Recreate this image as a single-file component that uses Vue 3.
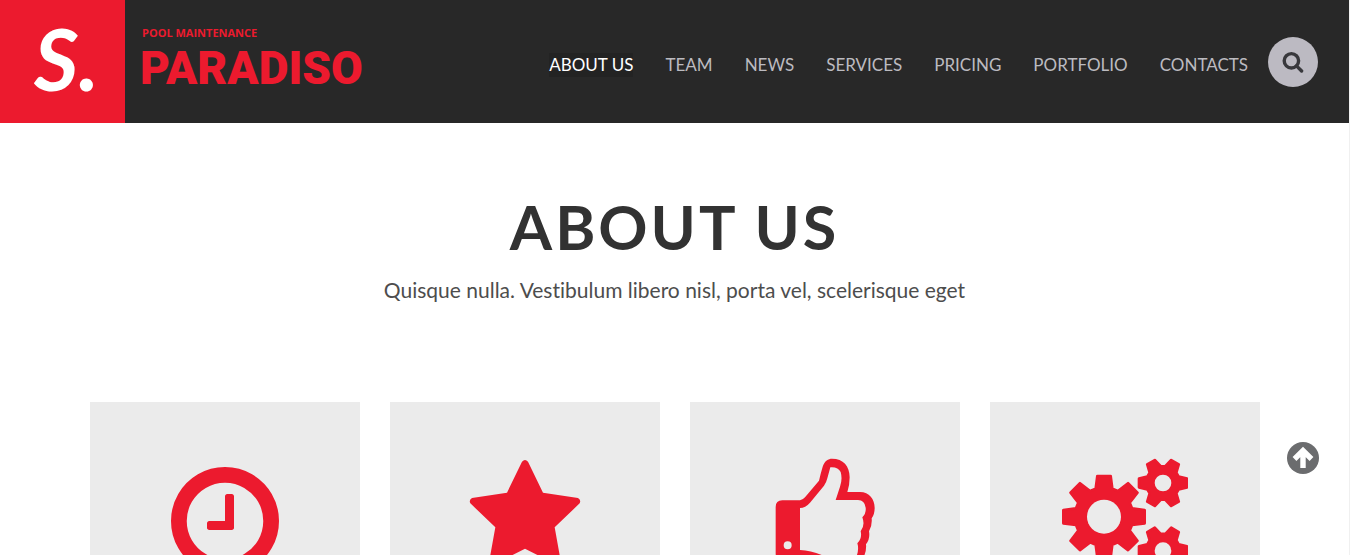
<script setup>
const links = ['About us', 'Team', 'News', 'Services', 'Pricing', 'Portfolio', 'Contacts']
const cards = ['clock', 'star', 'thumb', 'gears']

// Outline of a cog: each tooth is a tapered block on a round body.
function cog(cx, cy, teeth, offset, body, outer, baseHalf, tipHalf) {
  const points = []
  for (let i = 0; i < teeth; i++) {
    const a = offset + (i * 2 * Math.PI) / teeth
    const at = (r, t) =>
      `${(cx + r * Math.cos(a) - t * Math.sin(a)).toFixed(1)},${(cy + r * Math.sin(a) + t * Math.cos(a)).toFixed(1)}`
    points.push(at(body, -baseHalf), at(outer, -tipHalf), at(outer, tipHalf), at(body, baseHalf))
  }
  return points.join(' ')
}

const gears = [
  { x: 192, y: 230, hole: 51, points: cog(192, 230, 8, 0, 84, 122, 25, 20) },
  { x: 369, y: 129, hole: 25, points: cog(369, 129, 6, 0, 47, 72, 19, 13) },
  { x: 369, y: 332, hole: 25, points: cog(369, 332, 6, 0, 47, 72, 19, 13) }
]
</script>

<template>
  <div class="page">
    <header class="header">
      <a class="mark" href="#" aria-label="Home"><span>S.</span></a>
      <a class="brand" href="#">
        <span class="tag">POOL MAINTENANCE</span>
        <span class="name">PARADISO</span>
      </a>
      <nav class="nav">
        <a v-for="(link, i) in links" :key="link" href="#" :class="{ active: i === 0 }">{{ link }}</a>
      </nav>
      <button class="search" type="button" aria-label="Search">
        <svg viewBox="0 0 22 22" width="22" height="22">
          <circle cx="9.4" cy="9.8" r="7.2" fill="none" stroke="currentColor" stroke-width="3.4" />
          <path d="M14.5 14.9L19.6 20" stroke="currentColor" stroke-width="3.4" stroke-linecap="round" />
        </svg>
      </button>
    </header>

    <main>
      <section class="intro">
        <h1>About us</h1>
        <p>Quisque nulla. Vestibulum libero nisl, porta vel, scelerisque eget</p>
      </section>

      <section class="cards">
        <article v-for="card in cards" :key="card" class="card">
          <svg v-if="card === 'clock'" class="icon" viewBox="0 0 1792 1792">
            <path d="M1024 544v448q0 14-9 23t-23 9h-320q-14 0-23-9t-9-23v-64q0-14 9-23t23-9h224v-352q0-14 9-23t23-9h64q14 0 23 9t9 23zm416 352q0-148-73-273t-198-198-273-73-273 73-198 198-73 273 73 273 198 198 273 73 273-73 198-198 73-273zm224 0q0 209-103 385.500t-279.500 279.500-385.500 103-385.500-103-279.500-279.500-103-385.500 103-385.500 279.500-279.500 385.500-103 385.500 103 279.500 279.500 103 385.500z" />
          </svg>
          <svg v-else-if="card === 'star'" class="icon" viewBox="36 189 378 378">
            <path d="M216 200Q225 190 234 200L279 293L384 309Q394 315 389 325L314 397L332 497Q331 510 319 509L225 461L131 509Q119 510 118 497L136 397L61 325Q56 315 66 309L171 293Z" />
          </svg>
          <svg v-else-if="card === 'thumb'" class="icon" viewBox="36 54 378 378">
            <path fill-rule="evenodd" d="M97 181H150Q158 180 165 172L207 122Q212 100 218 80C224 62 235 56 246 56C280 56 299 78 299 112Q299 135 292 156H330C358 156 374 178 374 203Q374 223 365 235Q367 258 357 274Q361 296 348 313Q350 335 340 352C325 386 285 392 250 388L150 360H97Q77 360 77 340V201Q77 181 97 181ZM150 204V330Q182 331 215 345C260 366 315 365 321 345Q327 325 322 310Q337 295 332 274Q346 256 337 232Q349 220 347 203Q344 180 324 180H257L270 140Q278 118 272 96Q264 80 241 82L232 115Q229 128 222 137L180 188Q166 204 150 204ZM101 316a12 12 0 1 0 24 0a12 12 0 1 0-24 0Z" />
          </svg>
          <svg v-else class="icon" viewBox="66 54 378 378">
            <g v-for="(gear, i) in gears" :key="i">
              <polygon :points="gear.points" stroke="currentColor" stroke-width="8" stroke-linejoin="round" />
              <circle :cx="gear.x" :cy="gear.y" :r="gear.hole" class="hole" />
            </g>
          </svg>
        </article>
      </section>
    </main>

    <button class="to-top" type="button" aria-label="Back to top">
      <svg viewBox="0 0 32 32" width="32" height="32">
        <circle cx="16" cy="16" r="16" fill="#6b6c6e" />
        <path d="M16 26V9M7.500 17L16 8.500L24.500 17" fill="none" stroke="#fff" stroke-width="5.400" />
      </svg>
    </button>
  </div>
</template>

<style>
body {
  margin: 0;
  background: #fff;
}
</style>

<style scoped>
.page {
  height: 100vh;
  overflow: hidden;
  margin-right: 1px;
  border-right: 1px solid #f0f0f0;
  box-sizing: border-box;
  font-family: Lato, "Open Sans", sans-serif;
  font-variant-ligatures: none;
  color: #4d4d4d;
}
.header {
  display: flex;
  align-items: center;
  height: 123px;
  padding-right: 31px;
  background: #282828;
}
a {
  text-decoration: none;
}
.mark {
  display: flex;
  align-items: center;
  justify-content: center;
  box-sizing: border-box;
  width: 125px;
  height: 100%;
  padding: 0 0 8px 8px;
  background: #ec1a2e;
  color: #fff;
  font-size: 86px;
  font-style: italic;
  font-weight: 700;
  line-height: 1;
}
.brand {
  display: flex;
  flex-direction: column;
  margin-left: 15px;
  padding-bottom: 4px;
  color: #ec1a2e;
  font-weight: 700;
}
.tag {
  padding-left: 2px;
  font-family: "Open Sans", sans-serif;
  font-size: 11px;
  line-height: 16px;
}
.name {
  font-family: Roboto, sans-serif;
  font-size: 46px;
  font-weight: 900;
  line-height: 54px;
}
.nav {
  display: flex;
  gap: 32px;
  margin-left: auto;
  padding-top: 6px;
  font-size: 17px;
  line-height: 24px;
  text-transform: uppercase;
  white-space: nowrap;
}
.nav a {
  color: #bcbbc0;
}
.nav .active {
  background: #232323;
  color: #fff;
}
.search {
  display: flex;
  align-items: center;
  justify-content: center;
  width: 50px;
  height: 50px;
  margin-left: 20px;
  padding: 0;
  border: 0;
  border-radius: 50%;
  background: #bcbac2;
  color: #38383c;
}
.intro {
  padding: 68px 20px 0;
  text-align: center;
}
h1 {
  margin: 0;
  color: #323232;
  font-size: 61px;
  font-weight: 700;
  line-height: 72px;
  letter-spacing: 3px;
  text-transform: uppercase;
}
.intro p {
  margin: 12px 0 0;
  font-size: 21px;
  line-height: 30px;
}
.cards {
  display: grid;
  grid-template-columns: repeat(4, 1fr);
  gap: 30px;
  max-width: 1170px;
  margin: 97px auto 0;
}
.card {
  display: flex;
  justify-content: center;
  padding: 56px 0 80px;
  background: #ebebeb;
}
.icon {
  width: 126px;
  height: 126px;
  color: #ec1a2e;
  fill: currentColor;
}
.hole {
  fill: #ebebeb;
}
.to-top {
  position: fixed;
  right: 32px;
  bottom: 81px;
  width: 32px;
  height: 32px;
  padding: 0;
  border: 0;
  background: none;
}
.to-top svg {
  display: block;
}
</style>
